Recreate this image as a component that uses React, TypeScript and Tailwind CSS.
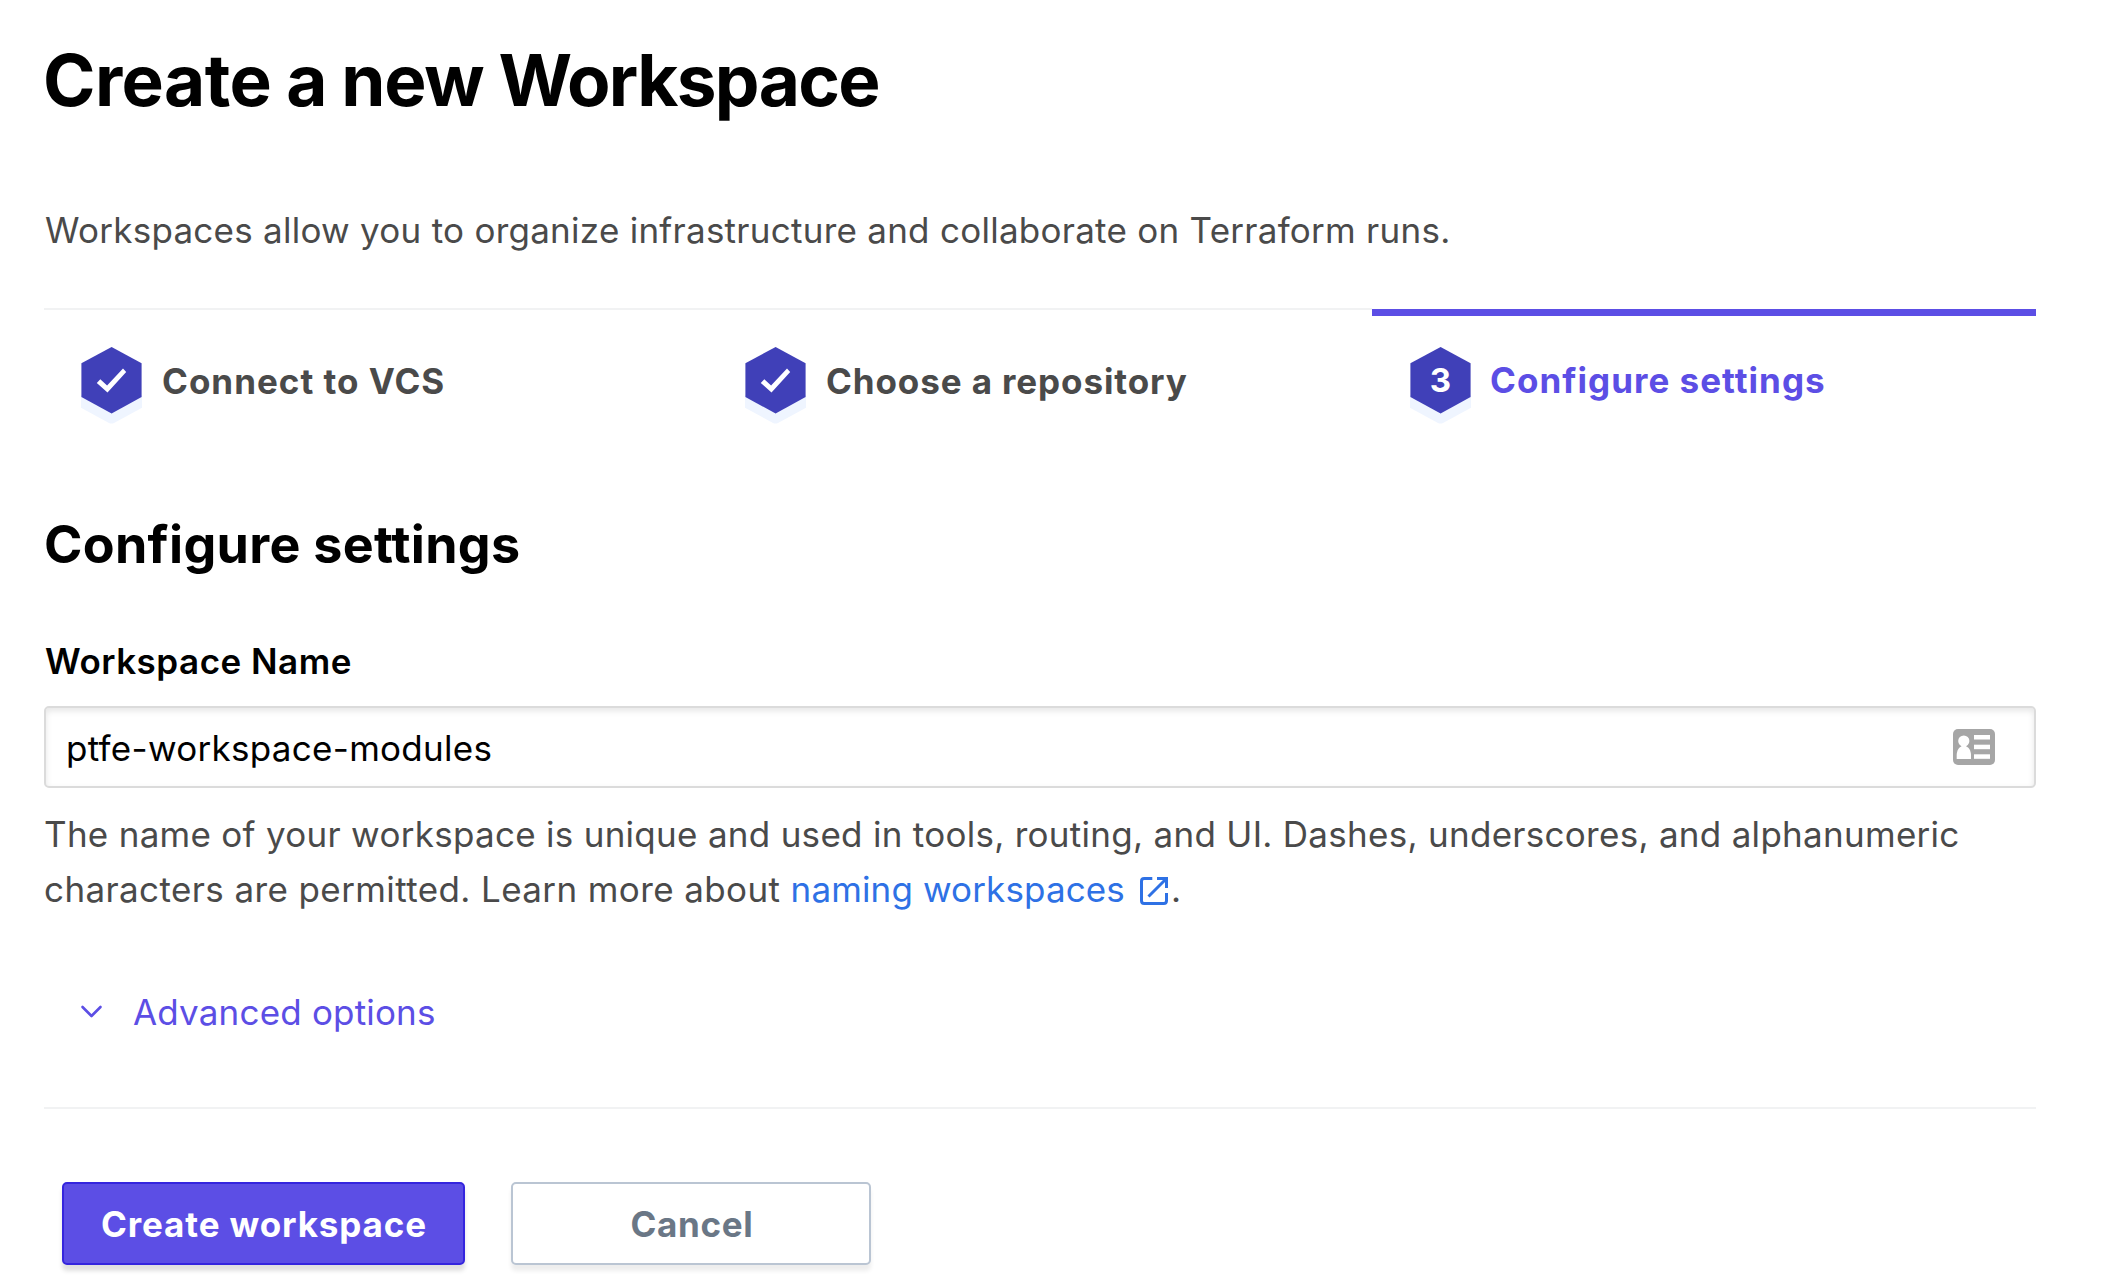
import React from "react";

function Hexagon({ children }: { children: React.ReactNode }) {
  return (
    <svg width="61" height="78" viewBox="0 0 61 78" className="block shrink-0">
      <path d="M0 48H61V60.8L33 75.9Q30.5 77.1 28 75.9L0 60.8Z" fill="#eff5ff" />
      <path d="M30.6 0L60.6 16.3V50L30.6 66.6L0.4 50V16.3Z" fill="#4040b8" />
      {children}
    </svg>
  );
}

const Check = () => (
  <path d="M15.8 36L19.3 32.2L26.1 38.4L42 21.5L45.2 25L26.5 45.5Z" fill="#fff" />
);

function ContactCardIcon() {
  return (
    <svg width="42" height="36" viewBox="0 0 42 36" className="block">
      <rect width="42" height="36" rx="5" fill="#a6a6a6" />
      <g fill="#fff">
        <rect x="21" y="6" width="16" height="4.5" />
        <rect x="21" y="15.7" width="16" height="4.5" />
        <rect x="21" y="25.3" width="16" height="4.5" />
        <circle cx="10.8" cy="12" r="5.6" />
        <path d="M8.4 16H13.2V18H8.4Z" />
        <path d="M3.7 30V26C3.7 21 6.5 18 8.6 17.5H13C15.2 18 18 21 18 26V30Z" />
      </g>
    </svg>
  );
}

function ExternalLinkIcon() {
  return (
    <svg width="28" height="28" viewBox="0 0 28 28" className="ml-[15px] inline-block align-[-3px]" fill="none" stroke="#2e71e5" strokeWidth="3">
      <path d="M12.3 1.5H4.2Q1.5 1.5 1.5 4.2V23.8Q1.5 26.5 4.2 26.5H23.8Q26.5 26.5 26.5 23.8V16" />
      <path d="M17 1.5H26.5V11" />
      <path d="M26 2L8.5 19.5" />
    </svg>
  );
}

export default function App() {
  return (
    <main className="h-[1286px] w-[2110px] overflow-hidden bg-white pl-[44px] pt-[40px] font-[Inter,sans-serif] text-[35px] leading-[56px] text-[#4a4a4a]">
      <div className="w-[1992px]">
        <h1 className="-ml-px text-[71px] font-bold leading-[80px] tracking-[-1.22px] text-black [word-spacing:-0.6px]">
          <span className="tracking-[-0.55px]">Create</span> a new <span className="tracking-[-1.65px]">Workspace</span>
        </h1>
        <p className="ml-px mt-[82px] tracking-[0.26px]">Workspaces allow you to organize infrastructure and collaborate on Terraform runs.</p>

        <ol className="mt-[50px] grid h-[120px] grid-cols-3 font-bold leading-[40px]">
          <li className="flex items-start gap-[20px] border-t-2 border-[#f1f2f3] pl-[37px] pt-[37px]">
            <Hexagon><Check /></Hexagon>
            <span className="mt-[14px] tracking-[1px]">Connect to VCS</span>
          </li>
          <li className="flex items-start gap-[20px] border-t-2 border-[#f1f2f3] pl-[37px] pt-[37px]">
            <Hexagon><Check /></Hexagon>
            <span className="mt-[14px] tracking-[0.9px]">Choose a repository</span>
          </li>
          <li className="mt-px flex items-start gap-[19px] border-t-[7px] border-[#5c4ee5] pl-[38px] pt-[31px] text-[#5c4ee5]">
            <Hexagon>
              <text x="30.4" y="45" textAnchor="middle" fontSize="33" fontWeight="700" fill="#fff">3</text>
            </Hexagon>
            <span className="mt-[13px] tracking-[1.03px]">Configure settings</span>
          </li>
        </ol>

        <h2 className="mt-[85px] text-[52px] font-bold leading-[64px] tracking-[0.29px] text-black">Configure settings</h2>

        <label className="ml-px mt-[56px] block font-semibold tracking-[0.5px] text-black">Workspace Name</label>
        <div className="mt-[17px] flex h-[82px] items-center justify-between rounded-[5px] border-2 border-[#dbdbdb] pl-[20px] pr-[39px] text-black shadow-[inset_0_3px_6px_rgba(10,10,10,0.1)]">
          <span className="pt-[2px] tracking-[0.29px]">ptfe-workspace-modules</span>
          <ContactCardIcon />
        </div>
        <p className="mt-[19px] whitespace-nowrap leading-[55px] tracking-[0.285px]">
          The name of your workspace is unique and used in tools, routing, and UI. Dashes, underscores, and alphanumeric
          <br />
          <span className="tracking-[0.39px]">characters are permitted. Learn more about </span>
          <a className="tracking-[0.13px] text-[#2e71e5]">naming workspaces<ExternalLinkIcon /></a>
          <span className="ml-[3px]">.</span>
        </p>

        <button className="mt-[67px] flex h-[56px] items-center pl-[36px] tracking-[0.18px] text-[#5c4ee5]">
          <svg width="23" height="14" viewBox="0 0 23 14" className="block" fill="none" stroke="#5c4ee5" strokeWidth="2.6" strokeLinecap="round" strokeLinejoin="round">
            <path d="M2.5 2L11.5 11L20.5 2" />
          </svg>
          <span className="ml-[30px]">Advanced options</span>
        </button>

        <hr className="mt-[67px] border-t-2 border-[#f1f2f3]" />

        <div className="mt-[73px] flex gap-[46px] pl-[18px] font-bold">
          <button className="h-[83px] w-[403px] rounded-[5px] border-2 border-[#3525de] bg-[#5c4ee5] pl-px tracking-[0.87px] text-white shadow-[0_6px_4px_rgba(0,0,0,0.12)]">
            Create workspace
          </button>
          <button className="h-[83px] w-[360px] rounded-[5px] border-2 border-[#bac5d3] bg-white pl-[2px] tracking-[0.65px] text-[#6a7786] shadow-[0_6px_4px_rgba(0,0,0,0.07)]">
            Cancel
          </button>
        </div>
      </div>
    </main>
  );
}
